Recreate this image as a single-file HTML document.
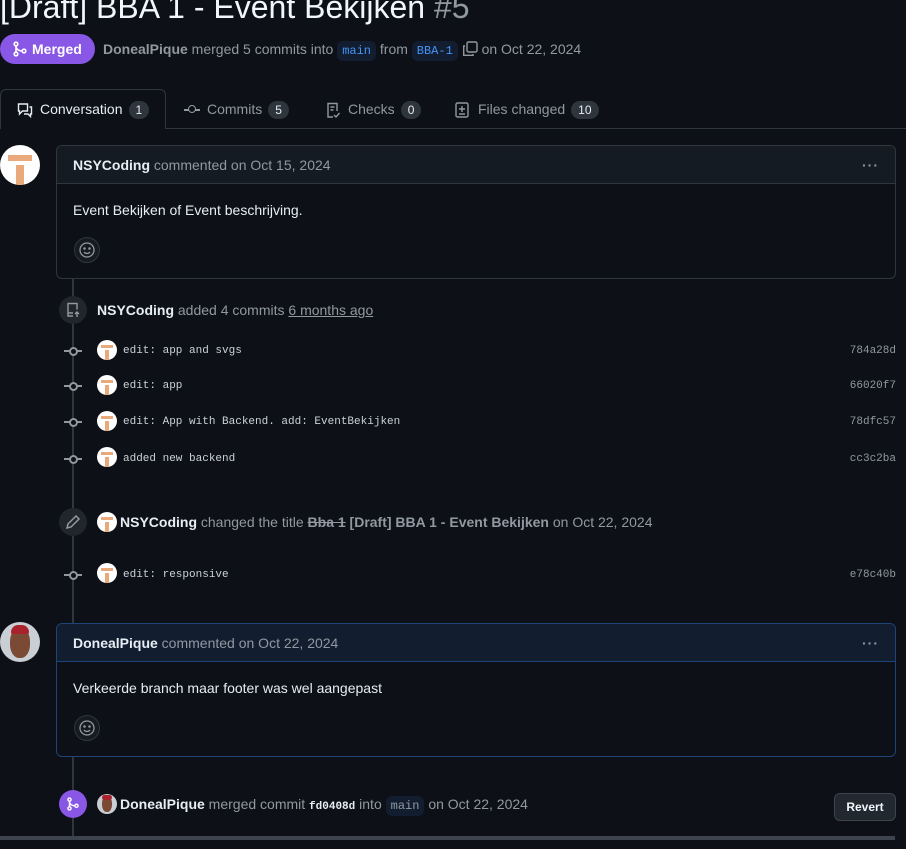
<!DOCTYPE html><html><head><style>
*{box-sizing:border-box;margin:0;padding:0}
body{width:906px;height:849px;background:#0d1117;color:#e6edf3;font-family:"Liberation Sans",sans-serif;font-size:14px;position:relative;overflow:hidden}
.a{position:absolute;white-space:nowrap}
.mut{color:#9198a1}
.b{font-weight:bold;color:#e6edf3}
.code{font-family:"Liberation Mono",monospace;font-size:12px;background:#121d2f;color:#4493f8;padding:3px 5px;border-radius:6px}
.cnt{display:inline-block;background:#2f353d;color:#e6edf3;border-radius:10px;font-size:12px;padding:2px 7px;margin-left:6px}
.av{position:absolute;border-radius:50%;background:#fff;overflow:hidden}
.mono{font-family:"Liberation Mono",monospace;font-size:11px;color:#c9d1d9}
.sha{font-family:"Liberation Mono",monospace;font-size:11px;color:#9198a1;right:10px}
.circ{position:absolute;width:28px;height:28px;border-radius:50%;background:#21262d;left:59px}
.dot{position:absolute;left:64px;width:18px;height:2px;background:#9198a1}
.dot:after{content:"";position:absolute;left:5px;top:-3px;width:5px;height:5px;border:2px solid #9198a1;border-radius:50%;background:#0d1117}
.box{position:absolute;left:56px;width:840px;height:134px;border-radius:6px;overflow:hidden;background:#0d1117}
.emo{position:absolute;left:17px;top:91px;width:26px;height:26px;border:1px solid #30363d;border-radius:50%;background:#161b22}
</style></head><body>
<div class="a" style="left:0;top:-13px;font-size:32px;line-height:40px;color:#f0f6fc">[Draft] BBA 1 - Event Bekijken <span style="color:#9198a1">#5</span></div>
<div class="a" style="left:0;top:34px;width:95px;height:30px;border-radius:15px;background:#8957e5;color:#fff;font-weight:bold;line-height:30px;padding-left:32px">Merged</div>
<svg class="a" style="left:12px;top:41px" width="16" height="16" viewBox="0 0 16 16" fill="none" stroke="#fff" stroke-width="1.6"><circle cx="4" cy="3" r="1.8"/><circle cx="4" cy="13" r="1.8"/><circle cx="12" cy="10" r="1.8"/><path d="M4 5v6M4 5c0 4 4 5 6 5"/></svg>
<div class="a mut" style="left:103px;top:41px"><span style="font-weight:bold">DonealPique</span> merged 5 commits into <span class="code">main</span> from <span class="code">BBA-1</span> <svg width="16" height="16" viewBox="0 0 16 16" fill="none" stroke="#9198a1" stroke-width="1.4" style="vertical-align:-3px"><rect x="5" y="1" width="10" height="10" rx="1.5"/><path d="M3 5H1.7v9.3H11V13"/></svg> on Oct 22, 2024</div>
<div class="a" style="left:0;top:128px;width:906px;height:1px;background:#30363d"></div>
<div class="a" style="left:0;top:89px;width:166px;height:40px;border:1px solid #30363d;border-bottom:none;border-radius:6px 6px 0 0;background:#0d1117"></div>
<svg class="a" style="left:17px;top:102px" width="16" height="16" viewBox="0 0 16 16" fill="none" stroke="#e6edf3" stroke-width="1.4"><path d="M1.5 2h9v7h-5l-3 3V9h-1z"/><path d="M12.5 5h2v7h-1v2.5l-2.5-2.5h-4"/></svg>
<div class="a" style="left:40px;top:101px;color:#e6edf3">Conversation<span class="cnt">1</span></div>
<div class="a" style="left:184px;top:109px;width:16px;height:1.5px;background:#9198a1"></div><div class="a" style="left:188px;top:105px;width:8px;height:8px;border:1.5px solid #9198a1;border-radius:50%;background:#0d1117"></div>
<div class="a mut" style="left:207px;top:101px">Commits<span class="cnt">5</span></div>
<svg class="a" style="left:325px;top:102px" width="16" height="16" viewBox="0 0 16 16" fill="none" stroke="#9198a1" stroke-width="1.4"><path d="M8 15H3V1.5h9V9"/><path d="M5.5 5h4M5.5 8h3M9 13l2 2 3.5-4"/></svg>
<div class="a mut" style="left:348px;top:101px">Checks<span class="cnt">0</span></div>
<svg class="a" style="left:454px;top:102px" width="16" height="16" viewBox="0 0 16 16" fill="none" stroke="#9198a1" stroke-width="1.4"><rect x="2" y="1" width="12" height="14" rx="1.5"/><path d="M8 4v6M5 7h6M5 12h6"/></svg>
<div class="a mut" style="left:478px;top:101px">Files changed<span class="cnt">10</span></div>

<div class="a" style="left:72px;top:278px;width:2px;height:562px;background:#30363d"></div>

<!-- comment 1 -->
<div class="av" style="left:0;top:145px;width:40px;height:40px"><div class="a" style="left:8px;top:10px;width:24px;height:6px;background:#e9a97a"></div><div class="a" style="left:16px;top:20px;width:8px;height:20px;background:#e9a97a"></div></div>
<div class="box" style="top:145px;border:1px solid #30363d">
<div style="height:38px;background:#151b23;border-bottom:1px solid #30363d;padding:11px 16px" class="mut"><span class="b">NSYCoding</span> commented on Oct 15, 2024<span style="float:right;letter-spacing:1px;font-weight:bold">···</span></div>
<div style="padding:18px 16px;color:#e6edf3">Event Bekijken of Event beschrijving.</div>
<div class="emo"><svg width="24" height="24" viewBox="0 0 24 24" fill="none" stroke="#9198a1" stroke-width="1.3"><circle cx="12" cy="12" r="7"/><circle cx="9.5" cy="10.5" r=".6" fill="#9198a1"/><circle cx="14.5" cy="10.5" r=".6" fill="#9198a1"/><path d="M9 14c1.5 2 4.5 2 6 0"/></svg></div>
</div>

<div class="circ" style="top:296px"></div>
<svg class="a" style="left:65px;top:302px" width="16" height="16" viewBox="0 0 16 16" fill="none" stroke="#9198a1" stroke-width="1.4"><path d="M8 14H3V1.5h9v6"/><path d="M3 11h5M12 15V10M10 12l2-2 2 2"/></svg>
<div class="a mut" style="left:97px;top:302px"><span class="b">NSYCoding</span> added 4 commits <span style="text-decoration:underline">6 months ago</span></div>

<div class="dot" style="top:350px"></div><div class="av" style="left:97px;top:340px;width:20px;height:20px"><div class="a" style="left:4px;top:5px;width:12px;height:3px;background:#e9a97a"></div><div class="a" style="left:8px;top:10px;width:4px;height:10px;background:#e9a97a"></div></div><div class="a mono" style="left:123px;top:345px">edit: app and svgs</div><div class="a sha" style="top:345px">784a28d</div>
<div class="dot" style="top:385px"></div><div class="av" style="left:97px;top:375px;width:20px;height:20px"><div class="a" style="left:4px;top:5px;width:12px;height:3px;background:#e9a97a"></div><div class="a" style="left:8px;top:10px;width:4px;height:10px;background:#e9a97a"></div></div><div class="a mono" style="left:123px;top:380px">edit: app</div><div class="a sha" style="top:380px">66020f7</div>
<div class="dot" style="top:421px"></div><div class="av" style="left:97px;top:411px;width:20px;height:20px"><div class="a" style="left:4px;top:5px;width:12px;height:3px;background:#e9a97a"></div><div class="a" style="left:8px;top:10px;width:4px;height:10px;background:#e9a97a"></div></div><div class="a mono" style="left:123px;top:416px">edit: App with Backend. add: EventBekijken</div><div class="a sha" style="top:416px">78dfc57</div>
<div class="dot" style="top:458px"></div><div class="av" style="left:97px;top:447px;width:20px;height:20px"><div class="a" style="left:4px;top:5px;width:12px;height:3px;background:#e9a97a"></div><div class="a" style="left:8px;top:10px;width:4px;height:10px;background:#e9a97a"></div></div><div class="a mono" style="left:123px;top:453px">added new backend</div><div class="a sha" style="top:453px">cc3c2ba</div>

<div class="circ" style="top:508px"></div>
<svg class="a" style="left:65px;top:514px" width="16" height="16" viewBox="0 0 16 16" fill="none" stroke="#9198a1" stroke-width="1.5"><path d="M11 2l3 3-8 8-4 1 1-4z"/></svg>
<div class="av" style="left:97px;top:512px;width:20px;height:20px"><div class="a" style="left:4px;top:5px;width:12px;height:3px;background:#e9a97a"></div><div class="a" style="left:8px;top:10px;width:4px;height:10px;background:#e9a97a"></div></div>
<div class="a mut" style="left:120px;top:514px"><span class="b">NSYCoding</span> changed the title <s style="font-weight:bold">Bba 1</s> <b>[Draft] BBA 1 - Event Bekijken</b> on Oct 22, 2024</div>

<div class="dot" style="top:574px"></div><div class="av" style="left:97px;top:563px;width:20px;height:20px"><div class="a" style="left:4px;top:5px;width:12px;height:3px;background:#e9a97a"></div><div class="a" style="left:8px;top:10px;width:4px;height:10px;background:#e9a97a"></div></div><div class="a mono" style="left:123px;top:569px">edit: responsive</div><div class="a sha" style="top:569px">e78c40b</div>

<!-- comment 2 -->
<div class="av" style="left:0;top:622px;width:40px;height:40px;background:#c9cfd4"><div class="a" style="left:10px;top:6px;width:20px;height:30px;border-radius:45%;background:#7a4a34"></div><div class="a" style="left:11px;top:3px;width:18px;height:9px;border-radius:8px 8px 2px 2px;background:#a8232b"></div></div>
<div class="box" style="top:623px;border:1px solid #1f4478">
<div style="height:38px;background:#121d2f;border-bottom:1px solid #1f4478;padding:11px 16px" class="mut"><span class="b">DonealPique</span> commented on Oct 22, 2024<span style="float:right;letter-spacing:1px;font-weight:bold">···</span></div>
<div style="padding:18px 16px;color:#e6edf3">Verkeerde branch maar footer was wel aangepast</div>
<div class="emo"><svg width="24" height="24" viewBox="0 0 24 24" fill="none" stroke="#9198a1" stroke-width="1.3"><circle cx="12" cy="12" r="7"/><circle cx="9.5" cy="10.5" r=".6" fill="#9198a1"/><circle cx="14.5" cy="10.5" r=".6" fill="#9198a1"/><path d="M9 14c1.5 2 4.5 2 6 0"/></svg></div>
</div>

<div class="circ" style="top:790px;background:#8957e5"></div>
<svg class="a" style="left:66px;top:797px" width="14" height="14" viewBox="0 0 16 16" fill="none" stroke="#fff" stroke-width="1.6"><circle cx="4" cy="3" r="1.8"/><circle cx="4" cy="13" r="1.8"/><circle cx="12" cy="10" r="1.8"/><path d="M4 5v6M4 5c0 4 4 5 6 5"/></svg>
<div class="av" style="left:97px;top:794px;width:20px;height:20px;background:#c9cfd4"><div class="a" style="left:5px;top:2px;width:10px;height:16px;border-radius:45%;background:#7a4a34"></div><div class="a" style="left:5px;top:1px;width:10px;height:5px;border-radius:4px;background:#a8232b"></div></div>
<div class="a mut" style="left:120px;top:796px"><span class="b">DonealPique</span> merged commit <span style="font-family:'Liberation Mono',monospace;font-size:11px;font-weight:bold;color:#e6edf3">fd0408d</span> into <span class="code" style="color:#9198a1">main</span> on Oct 22, 2024</div>
<div class="a" style="left:834px;top:793px;width:62px;height:28px;border:1px solid #3d444d;border-radius:6px;background:#212830;color:#f0f6fc;font-weight:bold;font-size:12px;text-align:center;line-height:26px">Revert</div>
<div class="a" style="left:0;top:836px;width:895px;height:4px;background:#3d444d"></div>
</body></html>
